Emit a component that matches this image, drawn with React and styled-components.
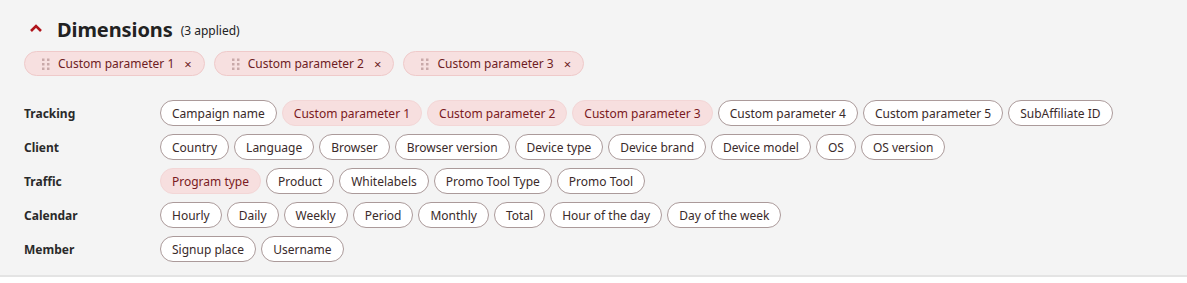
import React from 'react';
import styled, {createGlobalStyle} from 'styled-components';

const GlobalStyle = createGlobalStyle`
  html, body { margin: 0; padding: 0; background: #ffffff; }
  body { font-family: 'Noto Sans', 'Open Sans', sans-serif; }
`;

const groups = [
    {label: "Tracking", items: ["Campaign name", "Custom parameter 1", "Custom parameter 2", "Custom parameter 3", "Custom parameter 4", "Custom parameter 5", "SubAffiliate ID"]},
    {label: "Client", items: ["Country", "Language", "Browser", "Browser version", "Device type", "Device brand", "Device model", "OS", "OS version"]},
    {label: "Traffic", items: ["Program type", "Product", "Whitelabels", "Promo Tool Type", "Promo Tool"]},
    {label: "Calendar", items: ["Hourly", "Daily", "Weekly", "Period", "Monthly", "Total", "Hour of the day", "Day of the week"]},
    {label: "Member", items: ["Signup place", "Username"]},
];

const applied = ["Custom parameter 1", "Custom parameter 2", "Custom parameter 3", "Program type"];
const chips = ["Custom parameter 1", "Custom parameter 2", "Custom parameter 3"];

const DragDots = () => (
    <svg width="8" height="12" viewBox="0 0 8 12">
        {[0, 1, 2].map(r => [0, 1].map(c => (
            <rect key={r + "-" + c} x={c * 5} y={r * 4.5 + 0.5} width="2.5" height="2.5" fill="#c9a9a9"/>
        )))}
    </svg>
);

export default () => {
    return (<>
        <GlobalStyle/>
        <Panel>
            <Header>
                <Chevron width="14" height="10" viewBox="0 0 14 10">
                    <path d="M2 8 L7 3 L12 8" fill="none" stroke="#b0141b" strokeWidth="2.6" strokeLinecap="butt"/>
                </Chevron>
                <Title>Dimensions</Title>
                <Count>(3 applied)</Count>
            </Header>
            <ChipRow>
                {chips.map(c => (
                    <Chip key={c}>
                        <DragDots/>
                        <ChipText>{c}</ChipText>
                        <Close>×</Close>
                    </Chip>
                ))}
            </ChipRow>
            <Groups>
                {groups.map(g => (
                    <Group key={g.label}>
                        <Label>{g.label}</Label>
                        <Pills>
                            {g.items.map(i => (
                                <Pill key={i} $active={applied.includes(i)}>{i}</Pill>
                            ))}
                        </Pills>
                    </Group>
                ))}
            </Groups>
        </Panel>
    </>);
}

const Panel = styled.div`
  background-color: #f4f4f4;
  height: 277px;
  border-bottom: 2px solid #e4e4e4;
  padding: 14px 24px 0 24px;
  box-sizing: border-box;
`;

const Header = styled.div`
  display: flex; flex-direction: row;
  align-items: center;
  height: 30px;
`;

const Chevron = styled.svg`
  margin-left: 5px;
  margin-right: 14px;
  margin-top: -2px;
`;

const Title = styled.div`
  font-size: 20px;
  font-weight: 700;
  color: #222222;
  letter-spacing: -0.1px;
`;

const Count = styled.div`
  font-size: 12px;
  color: #222222;
  margin-left: 8px;
  margin-top: 2px;
`;

const ChipRow = styled.div`
  display: flex; flex-direction: row;
  gap: 9px;
  margin-top: 7px;
`;

const Chip = styled.div`
  display: flex; flex-direction: row;
  align-items: center;
  height: 25px;
  box-sizing: border-box;
  padding: 0 12px 0 17px;
  border: 1px solid #efcaca;
  background-color: #f7e0e0;
  border-radius: 13px;
`;

const ChipText = styled.span`
  font-size: 12px;
  color: #6e1d24;
  margin-left: 8px;
`;

const Close = styled.span`
  font-size: 13px;
  color: #6e1d24;
  margin-left: 10px;
`;

const Groups = styled.div`
  display: flex; flex-direction: column;
  gap: 8px;
  margin-top: 24px;
`;

const Group = styled.div`
  display: flex; flex-direction: row;
  align-items: center;
`;

const Label = styled.div`
  width: 136px;
  font-size: 12px;
  font-weight: 700;
  color: #2a2a2a;
`;

const Pills = styled.div`
  display: flex; flex-direction: row;
  gap: 5px;
`;

const Pill = styled.div`
  height: 26px;
  box-sizing: border-box;
  padding: 0 11px;
  display: flex; align-items: center;
  font-size: 12px;
  border-radius: 13px;
  border: 1px solid ${props => props.$active ? "#f3d6d6" : "#ab9a9a"};
  background-color: ${props => props.$active ? "#f7dfdf" : "#ffffff"};
  color: ${props => props.$active ? "#7a1a22" : "#3a2a2a"};
  white-space: nowrap;
`;
